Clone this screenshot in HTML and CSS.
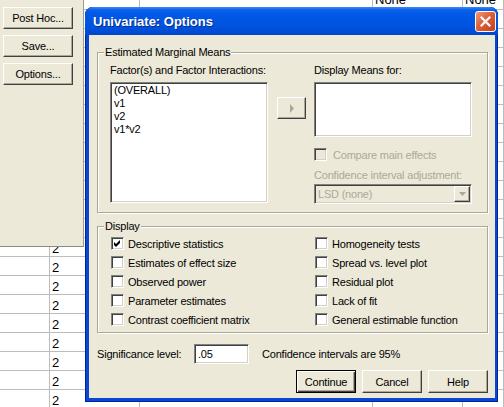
FILE: index.html
```html
<!DOCTYPE html>
<html>
<head>
<meta charset="utf-8">
<title>Univariate: Options</title>
<link rel="stylesheet" href="styles.css">
</head>
<body>
<div class="sheet">
  <div class="row top"><i></i><i></i><i></i><i>None</i><i>None</i></div>
  <div class="row"><i></i><i></i><i></i><i></i><i></i></div>
  <div class="row"><i></i><i></i><i></i><i></i><i></i></div>
  <div class="row"><i></i><i></i><i></i><i></i><i></i></div>
  <div class="row"><i></i><i></i><i></i><i></i><i></i></div>
  <div class="row"><i></i><i></i><i></i><i></i><i></i></div>
  <div class="row"><i></i><i></i><i></i><i></i><i></i></div>
  <div class="row"><i></i><i></i><i></i><i></i><i></i></div>
  <div class="row"><i></i><i></i><i></i><i></i><i></i></div>
  <div class="row"><i></i><i></i><i></i><i></i><i></i></div>
  <div class="row"><i></i><i></i><i></i><i></i><i></i></div>
  <div class="row"><i></i><i></i><i></i><i></i><i></i></div>
  <div class="row"><i></i><i></i><i></i><i></i><i></i></div>
  <div class="row"><i></i><i>2</i><i></i><i></i><i></i></div>
  <div class="row"><i></i><i>2</i><i></i><i></i><i></i></div>
  <div class="row"><i></i><i>2</i><i></i><i></i><i></i></div>
  <div class="row"><i></i><i>2</i><i></i><i></i><i></i></div>
  <div class="row"><i></i><i>2</i><i></i><i></i><i></i></div>
  <div class="row"><i></i><i>2</i><i></i><i></i><i></i></div>
  <div class="row"><i></i><i>2</i><i></i><i></i><i></i></div>
  <div class="row"><i></i><i>2</i><i></i><i></i><i></i></div>
  <div class="row"><i></i><i>2</i><i></i><i></i><i></i></div>
</div>

<div class="panel">
  <button class="btn side">Post Hoc...</button>
  <button class="btn side">Save...</button>
  <button class="btn side">Options...</button>
</div>

<div class="dialog">
  <div class="titlebar">
    <span class="title">Univariate: Options</span>
    <span class="close"><svg width="19" height="19" viewBox="0 0 19 19"><path d="M5.5 5.5 L13.5 13.5 M13.5 5.5 L5.5 13.5" stroke="#fff" stroke-width="2.2" stroke-linecap="square"/></svg></span>
  </div>
  <div class="body">
    <div class="group emm">
      <span class="group-title">Estimated Marginal Means</span>
      <div class="col">
        <div class="lbl">Factor(s) and Factor Interactions:</div>
        <div class="listbox big">
          <div>(OVERALL)</div>
          <div>v1</div>
          <div>v2</div>
          <div>v1*v2</div>
        </div>
      </div>
      <div class="btn arrowbtn"><svg width="6" height="9" viewBox="0 0 6 9"><path d="M1 0 L5 4.5 L1 9 Z" fill="#aca899"/></svg></div>
      <div class="col">
        <div class="lbl">Display Means for:</div>
        <div class="listbox small"></div>
        <div class="check dis"><span class="box"></span><span>Compare main effects</span></div>
        <div class="lbl dis-text">Confidence interval adjustment:</div>
        <div class="combo"><span>LSD (none)</span><span class="btn dd"><svg width="7" height="4" viewBox="0 0 7 4"><path d="M0 0 H7 L3.5 4 Z" fill="#aca899"/></svg></span></div>
      </div>
    </div>

    <div class="group disp">
      <span class="group-title">Display</span>
      <div class="checks">
        <div class="check"><span class="box"><svg width="11" height="11" viewBox="0 0 11 11"><path d="M2 4 L4 6 L8 2 L8 5 L4 9 L2 7 Z" fill="#000"/></svg></span><span>Descriptive statistics</span></div>
        <div class="check"><span class="box"></span><span>Homogeneity tests</span></div>
        <div class="check"><span class="box"></span><span>Estimates of effect size</span></div>
        <div class="check"><span class="box"></span><span>Spread vs. level plot</span></div>
        <div class="check"><span class="box"></span><span>Observed power</span></div>
        <div class="check"><span class="box"></span><span>Residual plot</span></div>
        <div class="check"><span class="box"></span><span>Parameter estimates</span></div>
        <div class="check"><span class="box"></span><span>Lack of fit</span></div>
        <div class="check"><span class="box"></span><span>Contrast coefficient matrix</span></div>
        <div class="check"><span class="box"></span><span>General estimable function</span></div>
      </div>
    </div>

    <div class="sig">
      <span class="sig-label">Significance level:</span>
      <span class="input">.05</span>
      <span class="note">Confidence intervals are 95%</span>
    </div>

    <div class="actions">
      <button class="btn wide default">Continue</button>
      <button class="btn wide">Cancel</button>
      <button class="btn wide">Help</button>
    </div>
  </div>
</div>
</body>
</html>
```

FILE: styles.css
```css
* { box-sizing: border-box; }

html, body { margin: 0; padding: 0; }

body {
  width: 504px;
  height: 407px;
  overflow: hidden;
  position: relative;
  background: #fff;
  font-family: "Liberation Sans", Arial, sans-serif;
  color: #000;
}

/* ---------- background data sheet ---------- */
.sheet {
  margin-top: -9px;
  font-size: 13px;
}

.row {
  display: grid;
  grid-template-columns: 50px 90px 233px 90px 1fr;
  height: 19px;
}

.row i {
  font-style: normal;
  border-right: 1px solid #bcbcbc;
  border-bottom: 1px solid #bcbcbc;
  padding: 3px 0 0 2px;
  line-height: 15px;
  white-space: nowrap;
  overflow: hidden;
}

.row.top i { padding-top: 1px; }

/* ---------- parent window panel ---------- */
.panel {
  position: absolute;
  left: 0;
  top: 0;
  width: 84px;
  height: 247px;
  background: #ece9d8;
  border-right: 1px solid #9d9a8a;
  border-bottom: 1px solid #8d8a7b;
  display: flex;
  flex-direction: column;
  align-items: flex-start;
  gap: 6px;
  padding: 7px 0 0 3px;
}

/* ---------- classic buttons ---------- */
.btn {
  font-family: inherit;
  font-size: 11px;
  letter-spacing: -0.2px;
  color: #000;
  background: #ece9d8;
  border: 1px solid;
  border-color: #fff #404040 #404040 #fff;
  box-shadow: inset -1px -1px 0 #aca899;
  padding: 0;
  margin: 0;
  display: flex;
  align-items: center;
  justify-content: center;
}

.btn.side { width: 70px; height: 22px; }

.btn.wide { width: 60px; height: 23px; }

.btn.default {
  border-color: #000;
  box-shadow: inset 1px 1px 0 #fff, inset -1px -1px 0 #404040, inset -2px -2px 0 #aca899;
}

/* ---------- dialog window ---------- */
.dialog {
  position: absolute;
  left: 85px;
  top: 7px;
  width: 413px;
  background: #0b45d3;
  padding: 0 3px 4px 4px;
  border-radius: 8px 8px 0 0;
  box-shadow: inset 0 0 0 1px #00239a;
  font-size: 11px;
  letter-spacing: -0.2px;
}

.titlebar {
  height: 28px;
  margin: 0 -3px 0 -4px;
  padding: 0 2px 0 8px;
  display: flex;
  align-items: center;
  justify-content: space-between;
  border-radius: 8px 8px 0 0;
  background: linear-gradient(#3c88f4 0px, #0b5fea 3px, #0058e6 8px, #0053df 20px, #0047cc 28px);
}

.title {
  color: #fff;
  font-weight: bold;
  font-size: 13px;
  letter-spacing: 0;
  text-shadow: 1px 1px 0 #0a2a8a;
  padding-top: 1px;
}

.close {
  width: 21px;
  height: 21px;
  border: 1px solid #fff;
  border-radius: 3px;
  background: linear-gradient(135deg, #f09a7c 0%, #de5f38 45%, #c8401a 100%);
  display: flex;
  align-items: center;
  justify-content: center;
}

.close svg { display: block; }

.body {
  background: #ece9d8;
  padding: 17px 7px 5px 8px;
}

/* ---------- group boxes ---------- */
.group {
  position: relative;
  border: 1px solid #aca899;
  box-shadow: inset 1px 1px 0 #fff, 1px 1px 0 #fff;
}

.group-title {
  position: absolute;
  left: 6px;
  top: -7px;
  padding: 0 1px;
  background: #ece9d8;
  line-height: 13px;
}

.emm {
  display: flex;
  align-items: flex-start;
  padding: 11px 15px 8px 12px;
}

.col {
  width: 158px;
  display: flex;
  flex-direction: column;
}

.lbl {
  line-height: 13px;
  margin-bottom: 5px;
  white-space: nowrap;
}

.listbox {
  background: #fff;
  border: 1px solid;
  border-color: #808080 #fff #fff #808080;
  box-shadow: inset 1px 1px 0 #404040, inset -1px -1px 0 #d4d0c8;
  padding: 1px 3px;
  line-height: 13px;
}

.listbox.big { height: 121px; }
.listbox.small { height: 55px; }

.arrowbtn {
  width: 29px;
  height: 22px;
  margin: 33px 8px 0 9px;
  flex: none;
}

.arrowbtn svg { display: block; margin-left: 1px; }

/* ---------- check boxes ---------- */
.check {
  display: flex;
  align-items: center;
  gap: 4px;
  height: 13px;
  white-space: nowrap;
}

.box {
  width: 13px;
  height: 13px;
  flex: none;
  background: #fff;
  border: 1px solid;
  border-color: #808080 #fff #fff #808080;
  box-shadow: inset 1px 1px 0 #404040, inset -1px -1px 0 #d4d0c8;
}

.box svg { display: block; }

.check.dis {
  margin-top: 11px;
  gap: 6px;
  color: #aca899;
}

.check.dis .box { background: #ece9d8; }

.dis-text {
  color: #aca899;
  margin-top: 8px;
  margin-bottom: 2px;
}

.combo {
  height: 20px;
  display: flex;
  align-items: center;
  justify-content: space-between;
  background: #ece9d8;
  border: 1px solid;
  border-color: #808080 #fff #fff #808080;
  box-shadow: inset 1px 1px 0 #404040, inset -1px -1px 0 #d4d0c8;
  padding: 1px 1px 1px 3px;
  color: #aca899;
}

.btn.dd {
  width: 16px;
  height: 16px;
}

.disp {
  margin-top: 13px;
}

.checks {
  display: grid;
  grid-template-columns: 204px 1fr;
  grid-auto-rows: 19px;
  align-items: center;
  padding: 7px 0 3px 13px;
}

/* ---------- bottom rows ---------- */
.sig {
  display: flex;
  align-items: center;
  height: 20px;
  margin-top: 11px;
}

.sig-label { width: 97px; flex: none; }

.input {
  width: 55px;
  height: 20px;
  flex: none;
  background: #fff;
  border: 1px solid;
  border-color: #808080 #fff #fff #808080;
  box-shadow: inset 1px 1px 0 #404040, inset -1px -1px 0 #d4d0c8;
  padding-left: 3px;
  line-height: 18px;
}

.note { margin-left: 13px; }

.actions {
  display: flex;
  justify-content: flex-end;
  gap: 6px;
  margin-top: 6px;
}
```
